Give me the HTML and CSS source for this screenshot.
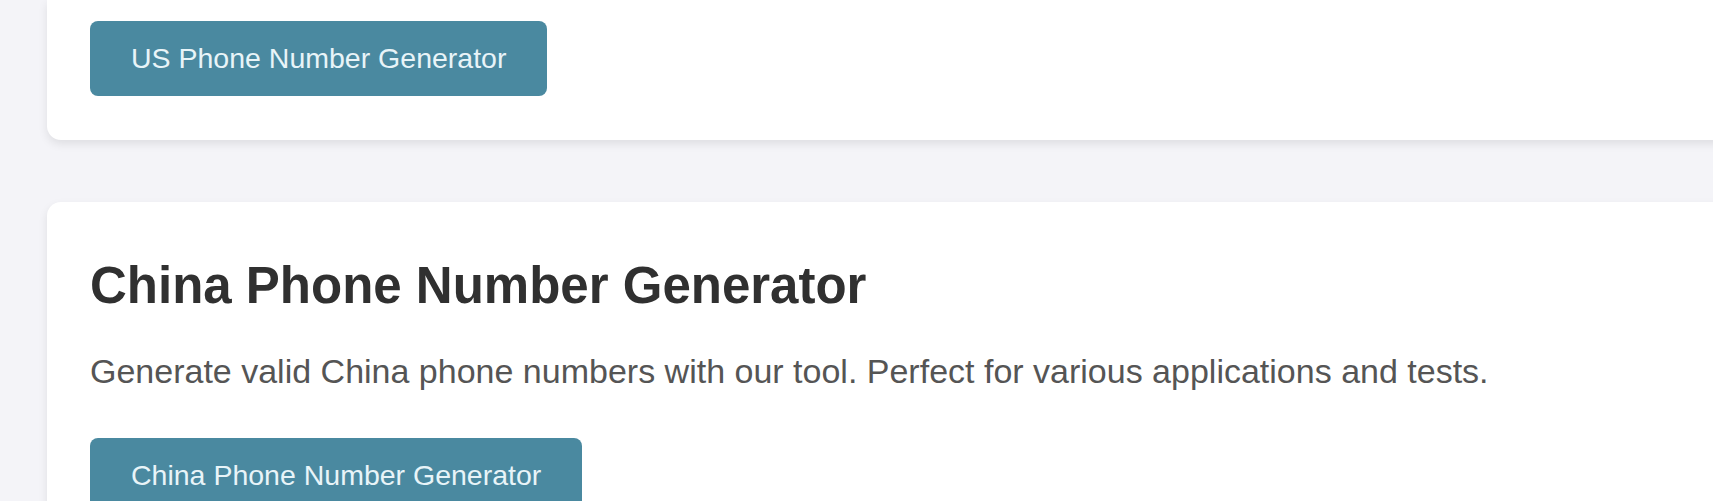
FILE: index.html
```html
<!DOCTYPE html>
<html lang="en">
<head>
<meta charset="utf-8">
<title>Phone Number Generators</title>
<link rel="stylesheet" href="styles.css">
</head>
<body>
<main class="list">
  <section class="card card-cut">
    <a class="btn" href="#">US Phone Number Generator</a>
  </section>
  <section class="card">
    <h2 class="card-title">China Phone Number Generator</h2>
    <p class="card-text">Generate valid China phone numbers with our tool. Perfect for various applications and tests.</p>
    <a class="btn" href="#">China Phone Number Generator</a>
  </section>
</main>
</body>
</html>
```
FILE: styles.css
```css
html, body {
  margin: 0;
  padding: 0;
  height: 100%;
  overflow: hidden;
}
body {
  background: #f4f4f8;
  font-family: "Liberation Sans", Arial, sans-serif;
}
.list {
  width: 1900px;
  padding-left: 47px;
  display: flex;
  flex-direction: column;
  gap: 62px;
}
.card {
  background: #ffffff;
  border-radius: 14px;
  box-shadow: 0 4px 10px rgba(0, 0, 0, 0.09);
  padding: 43px 43px 44px;
}
.card-cut {
  padding-top: 21px;
  border-radius: 0 0 14px 14px;
}
.card-title {
  margin: 13px 0 0;
  font-size: 51px;
  line-height: 56px;
  font-weight: 700;
  color: #303030;
}
.card-text {
  margin: 35px 0 0;
  font-size: 34px;
  line-height: 45px;
  color: #555555;
}
.card-text + .btn {
  margin-top: 44px;
}
.btn {
  display: inline-block;
  background: #4a89a0;
  color: #e8f4f8;
  text-decoration: none;
  font-size: 28.5px;
  line-height: 31px;
  padding: 22px 41px;
  border-radius: 8px;
}
```
